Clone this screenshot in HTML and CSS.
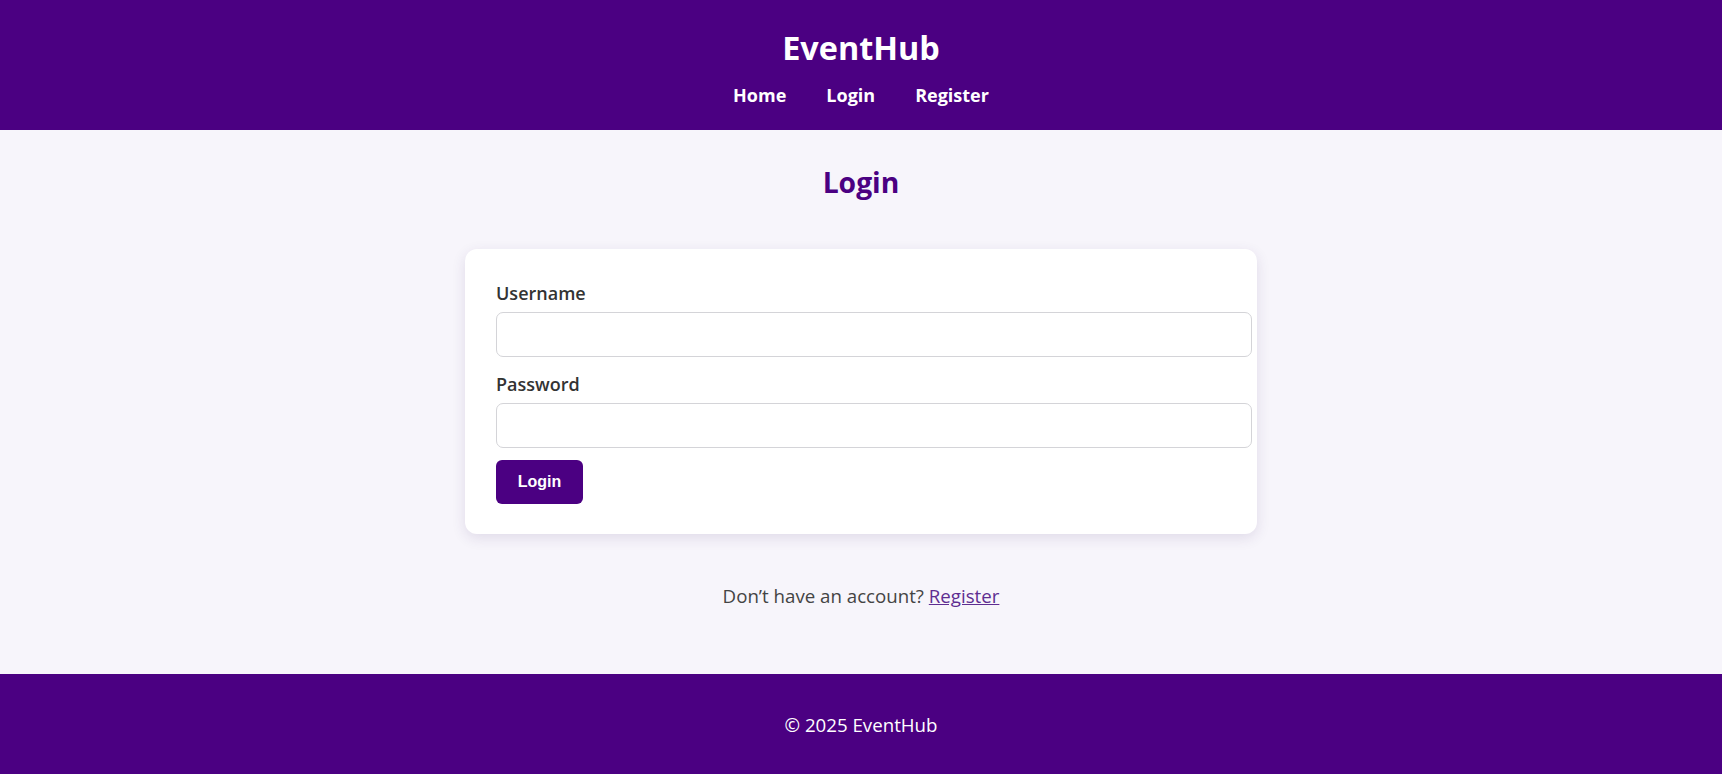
FILE: index.html
```html
<!DOCTYPE html>
<html lang="en">
<head>
<meta charset="utf-8">
<title>EventHub - Login</title>
<link rel="stylesheet" href="styles.css">
</head>
<body>
<header class="site-header">
  <h1 class="brand">EventHub</h1>
  <nav class="nav">
    <a href="#" class="nav-link">Home</a>
    <a href="#" class="nav-link">Login</a>
    <a href="#" class="nav-link">Register</a>
  </nav>
</header>
<main class="main">
  <h2 class="page-title">Login</h2>
  <form class="card">
    <div class="field">
      <label class="label" for="username">Username</label>
      <input class="input" id="username" type="text">
    </div>
    <div class="field">
      <label class="label" for="password">Password</label>
      <input class="input" id="password" type="password">
    </div>
    <button class="btn" type="button">Login</button>
  </form>
  <p class="alt">Don’t have an account? <a href="#" class="alt-link">Register</a></p>
</main>
<footer class="site-footer">
  <p class="copy">© 2025 EventHub</p>
</footer>
</body>
</html>
```
FILE: styles.css
```css
* { margin: 0; padding: 0; }
body {
  font-family: "Open Sans", "Noto Sans", sans-serif;
  font-size: 17.6px;
  line-height: 24px;
  background: #f7f5fb;
  color: #333;
}
.site-header {
  background: #4b0082;
  color: #fff;
  text-align: center;
  padding: 26px 0 0;
  height: 130px;
  box-sizing: border-box;
}
.brand {
  font-size: 32.4px;
  line-height: 43px;
  font-weight: 700;
}
.nav {
  display: flex;
  justify-content: center;
  gap: 40px;
  margin-top: 14px;
}
.nav-link {
  color: #fff;
  text-decoration: none;
  font-weight: 700;
  font-size: 18px;
  line-height: 24px;
}
.main {
  display: flex;
  flex-direction: column;
  align-items: center;
  padding: 34px 0 66px;
}
.page-title {
  color: #4b0082;
  font-size: 28.3px;
  line-height: 37px;
  font-weight: 700;
}
.card {
  margin-top: 48px;
  width: 792px;
  box-sizing: border-box;
  padding: 32px 31px 30px;
  background: #fff;
  border-radius: 12px;
  box-shadow: 0 4px 14px rgba(60, 30, 100, 0.12);
}
.field + .field { margin-top: 15px; }
.label {
  display: block;
  font-weight: 600;
  color: #333;
  font-size: 18px;
  margin-bottom: 7px;
}
.input {
  display: block;
  width: 100%;
  height: 43px;
  padding: 0 12px;
  border: 1px solid #d4d4d8;
  border-radius: 7px;
  background: #fff;
  font-size: 16px;
}
.btn {
  display: block;
  margin-top: 12px;
  background: #4b0082;
  color: #fff;
  border: none;
  border-radius: 6px;
  font-family: "Liberation Sans", Arial, sans-serif;
  font-weight: 700;
  font-size: 16px;
  width: 87px;
  height: 44px;
}
.alt {
  margin-top: 50px;
  color: #444;
  font-size: 18.7px;
}
.alt-link { color: #5e2d91; }
.site-footer {
  background: #4b0082;
  color: #fff;
  text-align: center;
  padding: 39px 0 40px;
}
.copy { font-size: 18.7px; line-height: 24px; }
```
